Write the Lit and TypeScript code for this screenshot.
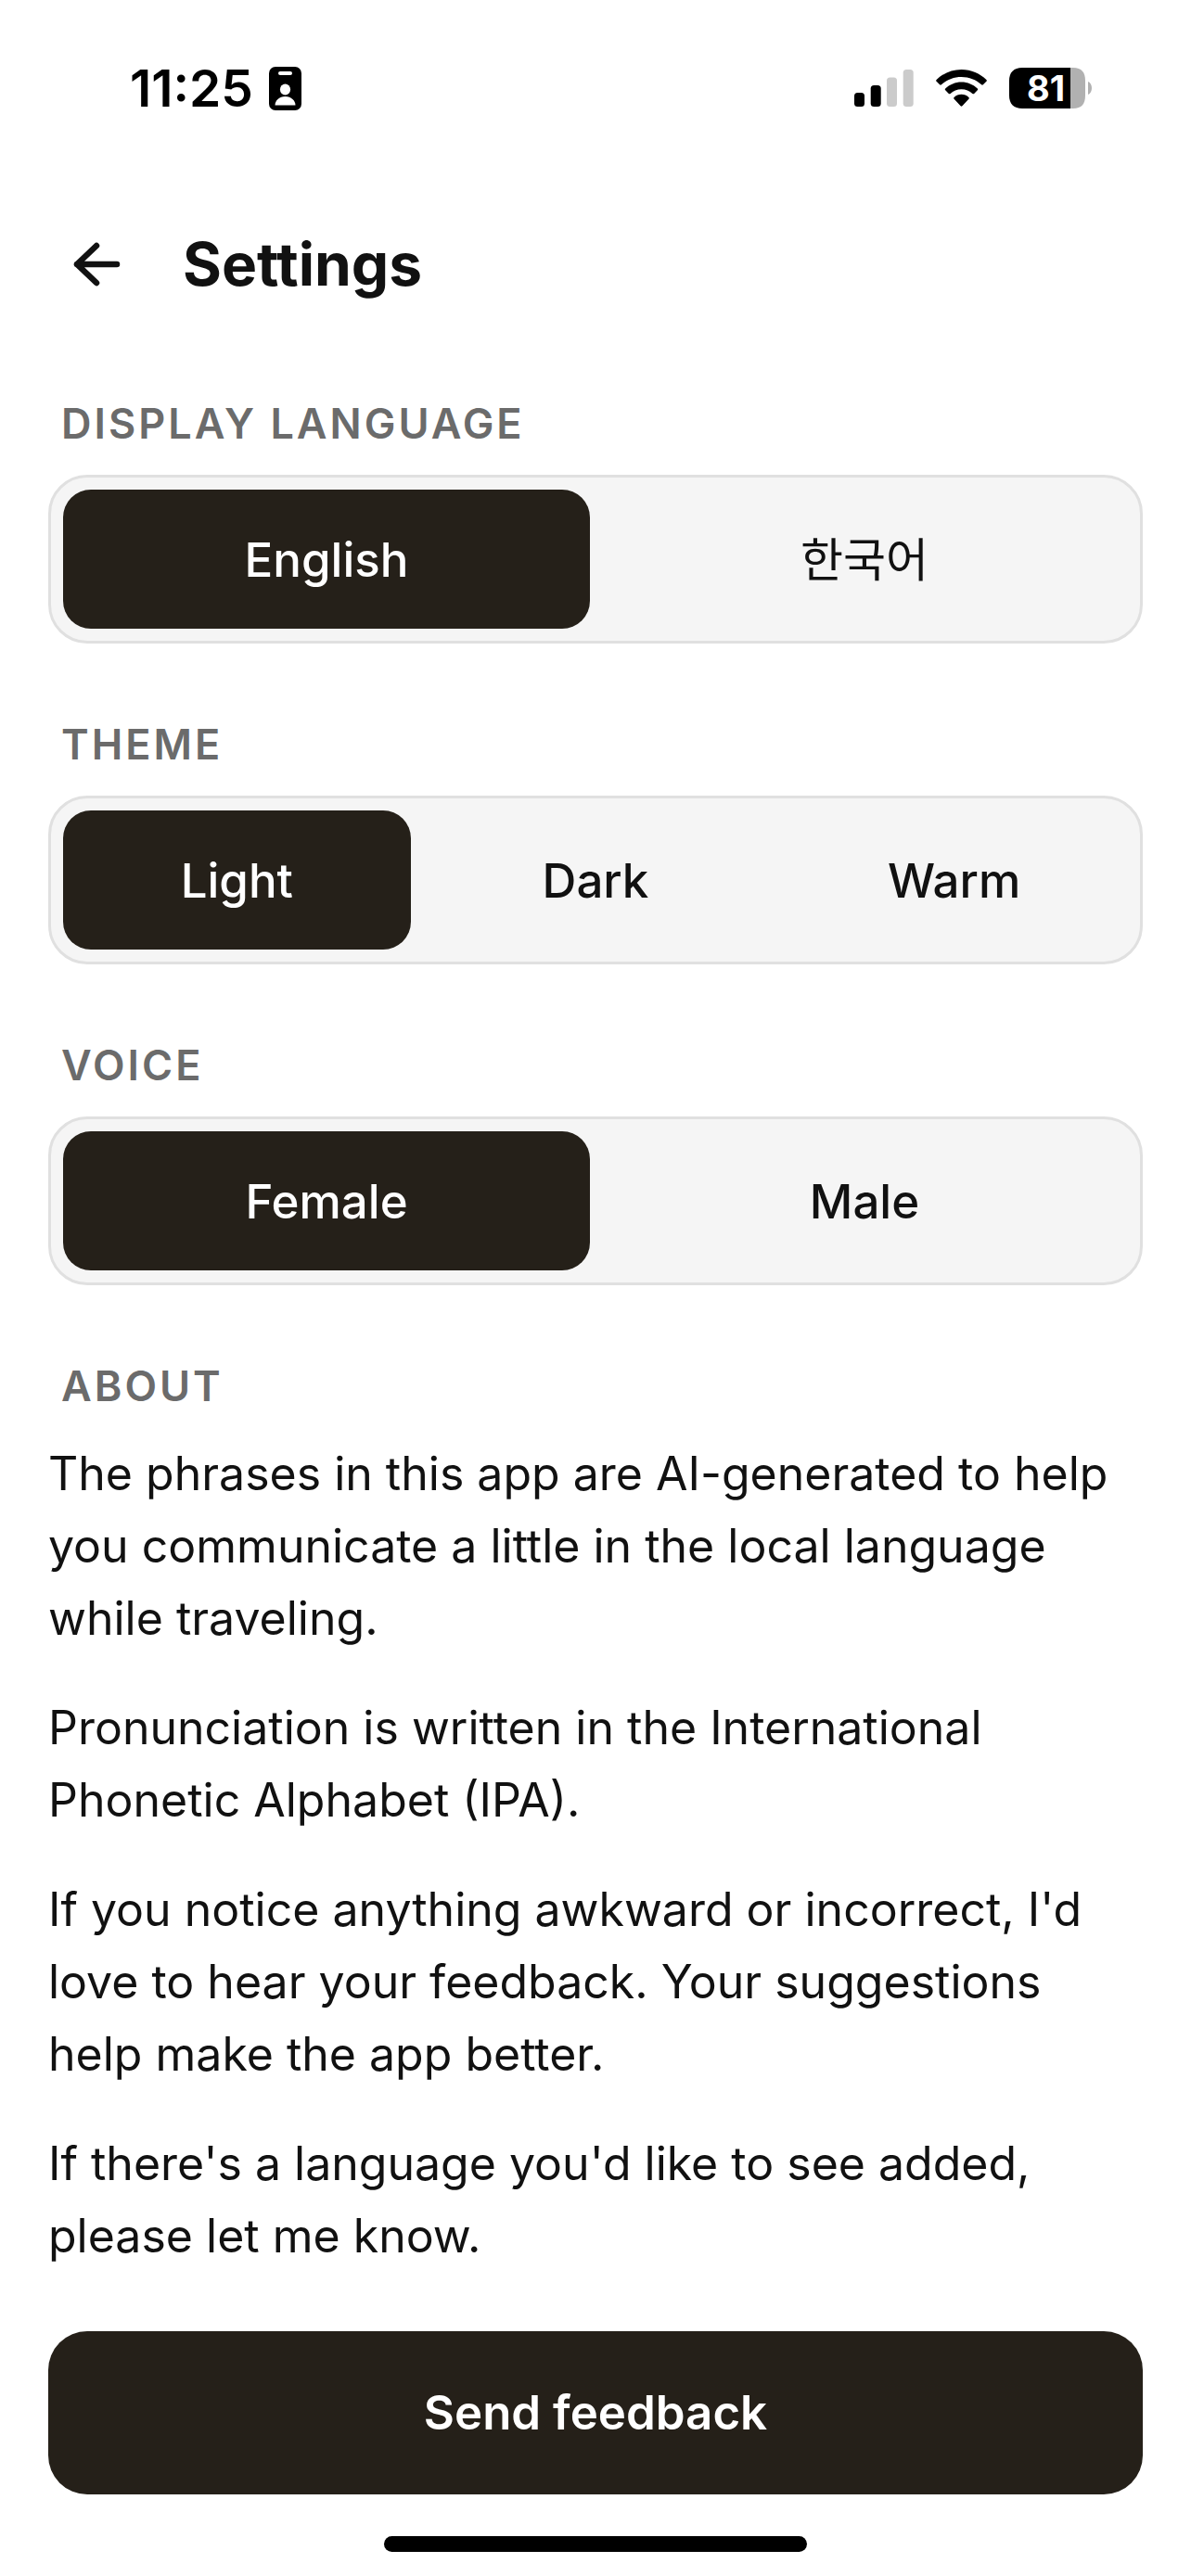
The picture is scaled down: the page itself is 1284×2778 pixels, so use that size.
import { LitElement, html, css } from "lit";
import { customElement, property, state } from "lit/decorators.js";

interface Option {
  value: string;
  label: string;
  lang?: string;
}

@customElement("status-bar")
class StatusBar extends LitElement {
  static styles = css`
    :host {
      display: flex;
      justify-content: space-between;
      align-items: center;
      height: 64px;
      padding: 0 107px 0 140px;
      color: #000;
    }
    .left,
    .right {
      display: flex;
      align-items: center;
    }
    .left {
      gap: 17px;
    }
    .right {
      gap: 24px;
    }
    .time {
      font-size: 55px;
      line-height: 64px;
      font-weight: 600;
    }
    svg {
      display: block;
    }
    .battery {
      display: grid;
      align-items: center;
    }
    .battery > * {
      grid-area: 1 / 1;
    }
    .level {
      padding-left: 19px;
      color: #fff;
      font-size: 38px;
      line-height: 44px;
      font-weight: 700;
    }
  `;

  render() {
    return html`
      <div class="left">
        <span class="time">11:25</span>
        <svg width="35" height="47" viewBox="0 0 35 47" aria-hidden="true">
          <rect width="35" height="47" rx="7" fill="#000" />
          <rect x="10" y="5" width="15" height="4" rx="2" fill="#fff" />
          <ellipse cx="17.5" cy="24.5" rx="5.6" ry="6" fill="#fff" />
          <path d="M6.5 41.5c0-5 4.5-9.5 11-9.5s11 4.5 11 9.5z" fill="#fff" />
        </svg>
      </div>
      <div class="right">
        <svg width="64" height="40" viewBox="0 0 64 40" aria-hidden="true">
          <rect x="0" y="25" width="11" height="15" rx="3.5" fill="#000" />
          <rect x="17.7" y="17" width="11" height="23" rx="3.5" fill="#000" />
          <rect x="35" y="8.5" width="11" height="31.5" rx="3.5" fill="#cbcbcb" />
          <rect x="52.7" y="0" width="11" height="40" rx="3.5" fill="#cbcbcb" />
        </svg>
        <svg width="55" height="40" viewBox="0 0 55 40" aria-hidden="true">
          <path d="M27.5 0C17 0 7.5 4.2.6 11c-.6.6-.6 1.2 0 1.8l3.5 3.5c.6.6 1.2.6 1.8 0C11.6 11 19.2 8 27.5 8s15.9 3 21.6 8.3c.6.6 1.2.6 1.8 0l3.5-3.5c.6-.6.6-1.2 0-1.8C47.5 4.2 38 0 27.5 0z" />
          <path d="M27.5 13.5c-6.7 0-12.8 2.7-17.3 7-.6.6-.6 1.2 0 1.8l3.6 3.6c.6.6 1.2.6 1.8 0 3.1-2.9 7.3-4.6 11.9-4.6s8.8 1.7 11.900 4.6c.6.6 1.2.6 1.8 0l3.6-3.6c.6-.6.6-1.2 0-1.8-4.5-4.3-10.6-7-17.3-7z" />
          <path d="M27.5 26.8c-3 0-5.8 1.2-7.9 3.2-.6.6-.6 1.2 0 1.8l7 7.5c.6.6 1.2.6 1.8 0l7-7.5c.6-.6.6-1.2 0-1.8-2.1-2-4.900-3.2-7.9-3.2z" />
        </svg>
        <div class="battery">
          <svg width="89" height="44" viewBox="0 0 89 44" aria-hidden="true">
            <path d="M66 0h3c9 0 13 5 13 14v16c0 9-4 14-13 14h-3z" fill="#b1b1b1" />
            <path d="M66 0H14C5 0 0 5 0 14v16c0 9 5 14 14 14h52z" fill="#000" />
            <path d="M85 15c2.6 1 4 3.8 4 7s-1.4 6-4 7z" fill="#b1b1b1" />
          </svg>
          <span class="level">81</span>
        </div>
      </div>
    `;
  }
}

@customElement("segmented-control")
class SegmentedControl extends LitElement {
  @property() heading = "";
  @property() name = "";
  @property({ attribute: false }) options: Option[] = [];
  @state() private selected = 0;

  static styles = css`
    :host {
      display: block;
    }
    .heading {
      margin: 0 0 28px;
      padding: 0 14px;
      color: #6b6b6b;
      font-size: 45px;
      line-height: 54px;
      font-weight: 600;
      letter-spacing: 3px;
      text-transform: uppercase;
    }
    .track {
      display: grid;
      grid-auto-flow: column;
      grid-auto-columns: 1fr;
      gap: 12px;
      padding: 13px;
      border: 3px solid #e0e0e0;
      border-radius: 42px;
      background: #f5f5f5;
    }
    .segment {
      position: relative;
      display: flex;
      align-items: center;
      justify-content: center;
      padding: 44px 12px 42px;
      border-radius: 30px;
      color: #111;
      font-size: 51px;
      line-height: 64px;
      font-weight: 500;
      cursor: pointer;
    }
    .segment:lang(ko) {
      font-size: 50px;
      font-weight: 400;
    }
    .segment:has(.radio:checked) {
      background: #252019;
      color: #fff;
    }
    .radio {
      position: absolute;
      inset: 0;
      width: 100%;
      height: 100%;
      margin: 0;
      opacity: 0;
      cursor: pointer;
    }
  `;

  render() {
    return html`
      <h2 class="heading" id="heading">${this.heading}</h2>
      <div class="track" role="radiogroup" aria-labelledby="heading">
        ${this.options.map(
          (option, index) => html`
            <label class="segment" lang=${option.lang ?? "en"}>
              <input
                class="radio"
                type="radio"
                name=${this.name}
                value=${option.value}
                .checked=${index === this.selected}
                @change=${() => (this.selected = index)}
              />
              <span>${option.label}</span>
            </label>
          `,
        )}
      </div>
    `;
  }
}

@customElement("app-root")
class AppRoot extends LitElement {
  static styles = css`
    :host {
      display: flex;
      flex-direction: column;
      box-sizing: border-box;
      min-height: 100vh;
      padding: 63px 0 26px;
      background: #fff;
      color: #111;
      font-family: Inter, "Noto Sans CJK KR", sans-serif;
    }
    .header {
      display: flex;
      align-items: center;
      gap: 56px;
      padding: 116px 67px 0;
    }
    .back {
      display: block;
      padding: 0;
      border: 0;
      background: none;
      color: inherit;
      cursor: pointer;
    }
    .back svg {
      display: block;
    }
    .title {
      margin: 0;
      font-size: 64px;
      line-height: 84px;
      font-weight: 700;
    }
    .content {
      display: flex;
      flex-direction: column;
      gap: 82px;
      padding: 103px 52px 0;
    }
    .heading {
      margin: 0 0 28px;
      padding: 0 14px;
      color: #6b6b6b;
      font-size: 45px;
      line-height: 54px;
      font-weight: 600;
      letter-spacing: 3px;
      text-transform: uppercase;
    }
    .text {
      display: flex;
      flex-direction: column;
      gap: 40px;
    }
    .text p {
      margin: 0;
      font-size: 50px;
      line-height: 78px;
    }
    .footer {
      display: flex;
      flex-direction: column;
      align-items: center;
      gap: 45px;
      margin-top: auto;
      padding: 0 52px;
    }
    .send {
      align-self: stretch;
      padding: 56px;
      border: 0;
      border-radius: 42px;
      background: #252019;
      color: #fff;
      font-family: inherit;
      font-size: 51px;
      line-height: 64px;
      font-weight: 600;
      cursor: pointer;
    }
    .home {
      width: 456px;
      height: 17px;
      border-radius: 9px;
      background: #000;
    }
  `;

  render() {
    return html`
      <status-bar></status-bar>
      <header class="header">
        <button class="back" aria-label="Back">
          <svg width="74" height="74" viewBox="0 0 74 74" fill="none" stroke="currentColor"
            stroke-width="6.5" stroke-linecap="round" stroke-linejoin="round">
            <path d="M59 37H16M37 17L16 37l21 20" />
          </svg>
        </button>
        <h1 class="title">Settings</h1>
      </header>
      <main class="content">
        <segmented-control
          heading="Display language"
          name="language"
          .options=${[
            { value: "en", label: "English" },
            { value: "ko", label: "한국어", lang: "ko" },
          ]}
        ></segmented-control>
        <segmented-control
          heading="Theme"
          name="theme"
          .options=${[
            { value: "light", label: "Light" },
            { value: "dark", label: "Dark" },
            { value: "warm", label: "Warm" },
          ]}
        ></segmented-control>
        <segmented-control
          heading="Voice"
          name="voice"
          .options=${[
            { value: "female", label: "Female" },
            { value: "male", label: "Male" },
          ]}
        ></segmented-control>
        <section class="about">
          <h2 class="heading">About</h2>
          <div class="text">
            <p>
              The phrases in this app are AI-generated to help you communicate a little in the
              local language while traveling.
            </p>
            <p>Pronunciation is written in the International Phonetic Alphabet (IPA).</p>
            <p>
              If you notice anything awkward or incorrect, I'd love to hear your feedback. Your
              suggestions help make the app better.
            </p>
            <p>If there's a language you'd like to see added, please let me know.</p>
          </div>
        </section>
      </main>
      <footer class="footer">
        <button class="send">Send feedback</button>
        <div class="home"></div>
      </footer>
    `;
  }
}
